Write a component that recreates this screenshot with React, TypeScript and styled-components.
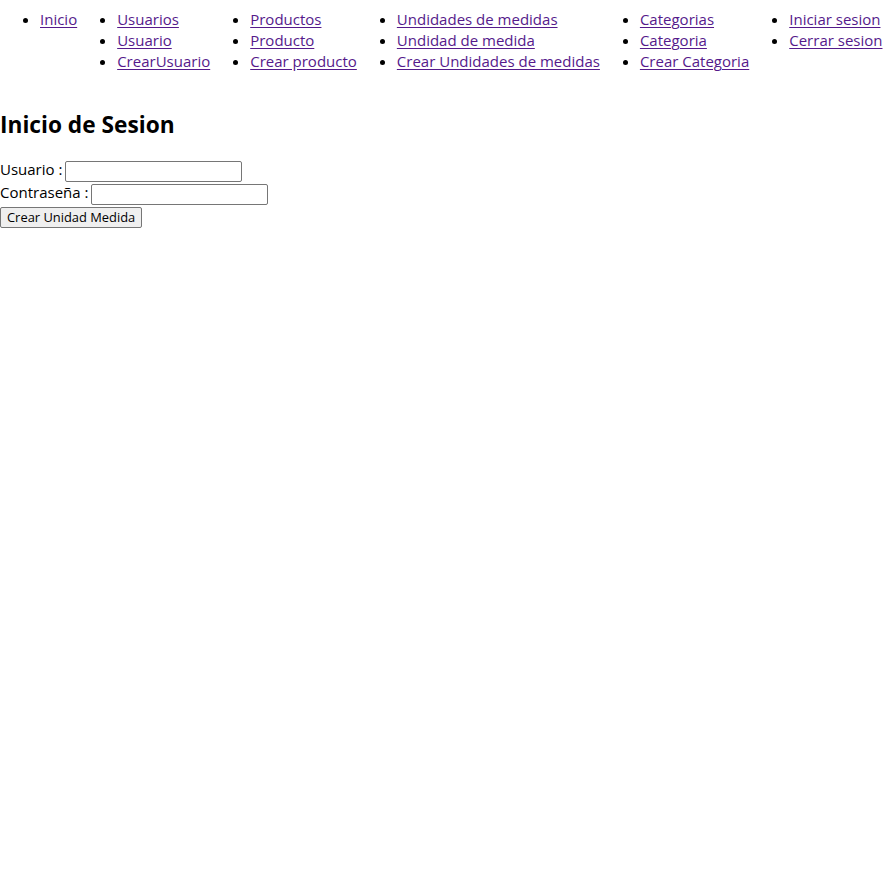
import React from "react";
import styled, { createGlobalStyle } from "styled-components";

const GlobalStyle = createGlobalStyle`
  html, body { margin: 0; padding: 0; background: #ffffff; }
  body { font-family: "Open Sans", "Noto Sans", sans-serif; font-size: 15px; color: #000000; }
`;

const Nav = styled.nav`
  display: flex;
  align-items: flex-start;
`;

const Menu = styled.ul`
  margin: 9px 0 16px 0;
  padding: 0 0 0 40px;
  list-style: disc;
`;

const Item = styled.li`
  line-height: 21px;
  white-space: nowrap;
`;

const Link = styled.a`
  color: #551a8b;
  text-decoration: underline;
  text-underline-offset: 2px;
  cursor: pointer;
`;

const Title = styled.h2`
  margin: 21px 0 20px 0;
  font-size: 22.7px;
  line-height: 32px;
  font-weight: 700;
`;

const Form = styled.form`
  display: flex;
  flex-direction: column;
  align-items: flex-start;
`;

const Field = styled.div`
  display: flex;
  align-items: flex-start;
  height: 23px;
`;

const Label = styled.label`
  line-height: 21px;
  margin-top: -2px;
  white-space: pre;
`;

const Input = styled.input`
  box-sizing: border-box;
  width: 177px;
  height: 21px;
  margin: 0 0 0 3px;
  padding: 1px 2px;
  border: 1px solid #767676;
  border-radius: 2px;
  background: #ffffff;
  font-family: "Liberation Sans", sans-serif;
  font-size: 13.333px;
`;

const Button = styled.button`
  box-sizing: border-box;
  height: 21px;
  margin: 0;
  padding: 0 6px;
  border: 1px solid #767676;
  border-radius: 2px;
  background: #efefef;
  color: #000000;
  font-family: "Open Sans", sans-serif;
  font-size: 12.9px;
  line-height: 19px;
  cursor: pointer;
`;

const menus: string[][] = [
  ["Inicio"],
  ["Usuarios", "Usuario", "CrearUsuario"],
  ["Productos", "Producto", "Crear producto"],
  ["Undidades de medidas", "Undidad de medida", "Crear Undidades de medidas"],
  ["Categorias", "Categoria", "Crear Categoria"],
  ["Iniciar sesion", "Cerrar sesion"],
];

export default function App() {
  return (
    <>
      <GlobalStyle />
      <Nav>
        {menus.map((group, i) => (
          <Menu key={i}>
            {group.map((label) => (
              <Item key={label}>
                <Link href="#">{label}</Link>
              </Item>
            ))}
          </Menu>
        ))}
      </Nav>
      <Title>Inicio de Sesion</Title>
      <Form onSubmit={(e) => e.preventDefault()}>
        <Field>
          <Label>Usuario :</Label>
          <Input type="text" />
        </Field>
        <Field>
          <Label>Contraseña :</Label>
          <Input type="password" />
        </Field>
        <Button type="submit">Crear Unidad Medida</Button>
      </Form>
    </>
  );
}
